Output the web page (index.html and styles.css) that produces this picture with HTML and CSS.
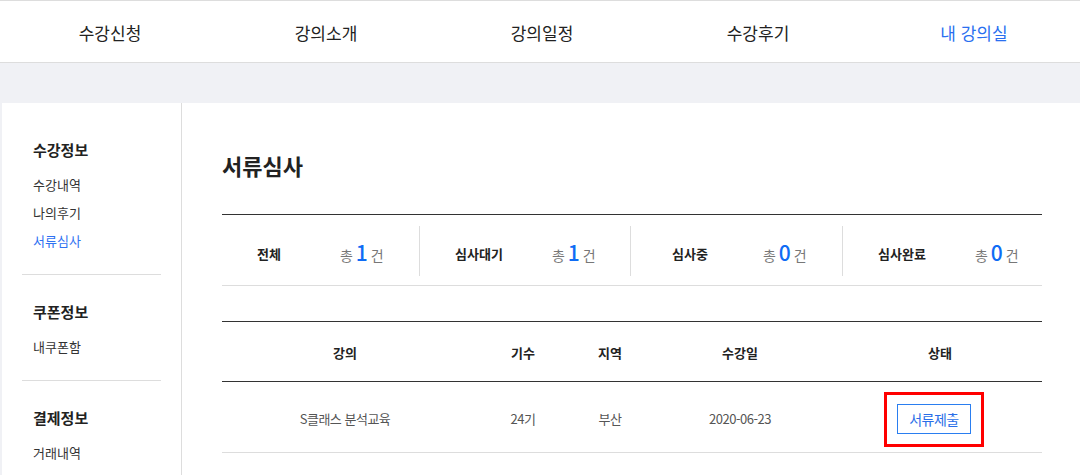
FILE: index.html
```html
<!DOCTYPE html>
<html lang="ko">
<head>
<meta charset="utf-8">
<title>서류심사</title>
<link rel="stylesheet" href="styles.css">
</head>
<body>
<header class="gnb">
  <nav class="gnb-list">
    <a class="gnb-item" href="#">수강신청</a>
    <a class="gnb-item" href="#">강의소개</a>
    <a class="gnb-item" href="#">강의일정</a>
    <a class="gnb-item" href="#">수강후기</a>
    <a class="gnb-item is-active" href="#">내 강의실</a>
  </nav>
</header>
<div class="page">
  <div class="layout">
    <aside class="side">
      <div class="side-sec">
        <h3 class="side-title">수강정보</h3>
        <a class="side-link" href="#">수강내역</a>
        <a class="side-link" href="#">나의후기</a>
        <a class="side-link is-active" href="#">서류심사</a>
      </div>
      <div class="side-sec">
        <h3 class="side-title">쿠폰정보</h3>
        <a class="side-link" href="#">내쿠폰함</a>
      </div>
      <div class="side-sec side-sec-last">
        <h3 class="side-title">결제정보</h3>
        <a class="side-link" href="#">거래내역</a>
      </div>
    </aside>
    <main class="content">
      <h2 class="page-title">서류심사</h2>
      <ul class="summary">
        <li class="sum-cell sum-first">
          <span class="sum-label">전체</span>
          <span class="sum-count">총 <em>1</em> 건</span>
        </li>
        <li class="sum-cell">
          <span class="sum-label">심사대기</span>
          <span class="sum-count">총 <em>1</em> 건</span>
        </li>
        <li class="sum-cell">
          <span class="sum-label">심사중</span>
          <span class="sum-count">총 <em>0</em> 건</span>
        </li>
        <li class="sum-cell sum-last">
          <span class="sum-label">심사완료</span>
          <span class="sum-count">총 <em>0</em> 건</span>
        </li>
      </ul>
      <table class="list">
        <colgroup>
          <col class="c-course"><col class="c-term"><col class="c-area"><col class="c-date"><col class="c-state">
        </colgroup>
        <thead>
          <tr><th>강의</th><th>기수</th><th>지역</th><th>수강일</th><th>상태</th></tr>
        </thead>
        <tbody>
          <tr>
            <td>S클래스 분석교육</td>
            <td>24기</td>
            <td>부산</td>
            <td>2020-06-23</td>
            <td class="td-state"><span class="btn-wrap"><button class="btn-submit" type="button">서류제출</button></span></td>
          </tr>
        </tbody>
      </table>
    </main>
  </div>
</div>
</body>
</html>
```
FILE: styles.css
```css
* { box-sizing: border-box; }
html, body { margin: 0; padding: 0; }
body {
  font-family: "Noto Sans CJK KR", "Noto Sans", sans-serif;
  color: #222;
  background: #f0f1f5;
  height: 475px;
  overflow: hidden;
}
a { text-decoration: none; color: inherit; }
ul { margin: 0; padding: 0; list-style: none; }
h2, h3 { margin: 0; }

.gnb {
  background: #fff;
  border-top: 1px solid #ddd;
  border-bottom: 1px solid #ddd;
  padding-top: 1px;
}
.gnb-list {
  display: grid;
  grid-template-columns: repeat(5, 216px);
  height: 60px;
}
.gnb-item {
  display: flex;
  align-items: center;
  justify-content: center;
  font-size: 17px;
  color: #222;
  padding-left: 4px;
}
.gnb-item.is-active { color: #2a6ff0; }

.page {
  padding: 40px 0 0 2px;
}
.layout {
  display: flex;
  background: #fff;
  min-height: 372px;
}

.side {
  width: 180px;
  flex: none;
  border-right: 1px solid #ddd;
  padding: 10px 20px 0;
}
.side-sec {
  display: flex;
  flex-direction: column;
  padding: 26px 11px 19px;
  border-bottom: 1px solid #ddd;
}
.side-sec-last { border-bottom: 0; }
.side-title {
  font-size: 15px;
  font-weight: 700;
  line-height: 22px;
  margin-bottom: 10px;
  color: #222;
}
.side-link {
  font-size: 13px;
  line-height: 28px;
  color: #333;
}
.side-link.is-active { color: #2f72f2; }

.content {
  flex: 1;
  padding: 46px 38px 0 40px;
}
.page-title {
  font-size: 22px;
  font-weight: 700;
  line-height: 32px;
  margin-bottom: 33px;
  color: #222;
}

.summary {
  display: grid;
  grid-template-columns: 197px 211px 212px 200px;
  border-top: 1px solid #333;
  border-bottom: 1px solid #ddd;
  padding: 11px 0 9px;
}
.sum-cell {
  display: flex;
  align-items: center;
  height: 50px;
  padding-top: 5px;
  border-left: 1px solid #ddd;
}
.sum-first { border-left: 0; }
.sum-label {
  width: 118px;
  text-align: center;
  font-size: 13px;
  font-weight: 700;
  color: #222;
}
.sum-first .sum-label { width: 94px; }
.sum-count {
  margin-left: 14px;
  font-size: 14px;
  color: #777;
  word-spacing: -1px;
}
.sum-first .sum-count { margin-left: 24px; }
.sum-count em {
  font-style: normal;
  font-size: 21px;
  font-weight: 500;
  color: #0f6cf5;
  line-height: 1;
}

.list {
  width: 820px;
  margin-top: 35px;
  border-collapse: collapse;
  table-layout: fixed;
}
.c-course { width: 246px; }
.c-term { width: 110px; }
.c-area { width: 64px; }
.c-date { width: 196px; }
.c-state { width: 204px; }
.list thead tr { border-top: 1px solid #333; border-bottom: 1px solid #333; }
.list th {
  height: 60px;
  padding: 2px 0 0;
  font-size: 13px;
  font-weight: 700;
  color: #222;
  text-align: center;
}
.list tbody tr { border-bottom: 1px solid #ddd; }
.list td {
  height: 71px;
  padding: 3px 0 0;
  font-size: 13px;
  color: #555;
  text-align: center;
  letter-spacing: -0.5px;
}
.list .td-state { padding-right: 12px; }
.btn-wrap {
  position: relative;
  display: inline-block;
  vertical-align: middle;
}
.btn-wrap::after {
  content: "";
  position: absolute;
  top: -12px;
  left: -13px;
  right: -13px;
  bottom: -13px;
  border: 3px solid #f00;
  pointer-events: none;
}
.btn-submit {
  display: block;
  width: 74px;
  height: 30px;
  border: 1px solid #2a7ef0;
  background: #fff;
  color: #2a6ee8;
  font-family: inherit;
  font-size: 14px;
  padding: 0;
  letter-spacing: -0.5px;
}
```
